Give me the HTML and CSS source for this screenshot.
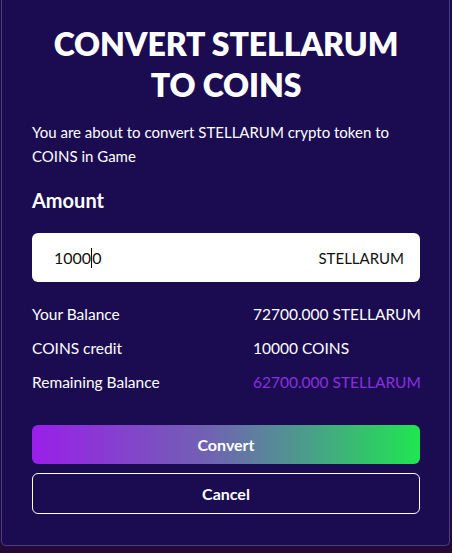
FILE: index.html
```html
<!DOCTYPE html>
<html>
<head>
<meta charset="utf-8">
<link rel="stylesheet" href="styles.css">
</head>
<body>
<div class="modal">
  <h1 class="title">CONVERT STELLARUM<br>TO COINS</h1>
  <p class="desc">You are about to convert STELLARUM crypto token to<br>COINS in Game</p>
  <h2 class="label">Amount</h2>
  <div class="field">
    <span class="field-value">1000<span class="caret"></span>0</span>
    <span class="field-unit">STELLARUM</span>
  </div>
  <div class="rows">
    <div class="row"><span class="row-key">Your Balance</span><span class="row-val">72700.000 STELLARUM</span></div>
    <div class="row"><span class="row-key">COINS credit</span><span class="row-val">10000 COINS</span></div>
    <div class="row"><span class="row-key">Remaining Balance</span><span class="row-val row-val-accent">62700.000 STELLARUM</span></div>
  </div>
  <div class="actions">
    <button class="btn btn-primary">Convert</button>
    <button class="btn btn-outline">Cancel</button>
  </div>
</div>
</body>
</html>
```
FILE: styles.css
```css
html, body {
  margin: 0;
  padding: 0;
}
body {
  width: 452px;
  height: 553px;
  overflow: hidden;
  background: linear-gradient(180deg, #170b45 0%, #170b45 90%, #240a32 100%);
  font-family: "Lato", "Liberation Sans", sans-serif;
  color: #ffffff;
}
.modal {
  box-sizing: border-box;
  margin-left: 1px;
  width: 449px;
  height: 546px;
  background: #1b0c52;
  border: 1px solid #4a3f86;
  border-top: none;
  border-radius: 0 0 5px 5px;
  padding: 23px 29px 0 30px;
  display: flex;
  flex-direction: column;
}
.title {
  margin: 0;
  font-size: 32px;
  line-height: 41px;
  font-weight: 800;
  text-align: center;
  letter-spacing: -0.1px;
}
.desc {
  margin: 15px 0 0;
  font-size: 15px;
  line-height: 24px;
  font-weight: 400;
}
.label {
  margin: 20px 0 0;
  font-size: 20px;
  line-height: 24px;
  font-weight: 700;
}
.field {
  margin-top: 21px;
  height: 49px;
  background: #ffffff;
  border-radius: 6px;
  display: flex;
  align-items: center;
  justify-content: space-between;
  padding: 0 16px 0 22px;
  color: #111111;
}
.field-value {
  font-size: 16px;
  display: inline-flex;
  align-items: center;
}
.caret {
  display: inline-block;
  width: 1px;
  height: 20px;
  background: #000000;
}
.field-unit {
  font-size: 15px;
}
.rows {
  margin-top: 15px;
  display: flex;
  flex-direction: column;
}
.row {
  display: grid;
  grid-template-columns: 221px 1fr;
  height: 34px;
  line-height: 34px;
  font-size: 15.5px;
}
.row-val {
  white-space: nowrap;
  font-size: 15.5px;
}
.row-val-accent {
  color: #8a2fe0;
}
.actions {
  margin-top: 26px;
  display: flex;
  flex-direction: column;
  gap: 9px;
}
.btn {
  font-family: inherit;
  font-weight: 700;
  font-size: 16px;
  color: #ffffff;
  border-radius: 6px;
  cursor: pointer;
  width: 100%;
}
.btn-primary {
  height: 39px;
  border: none;
  background: linear-gradient(90deg, #9a1fe9 0%, #7161b3 45%, #4c9b8c 70%, #1fe650 100%);
}
.btn-outline {
  height: 41px;
  background: transparent;
  border: 1px solid #ffffff;
}
```
